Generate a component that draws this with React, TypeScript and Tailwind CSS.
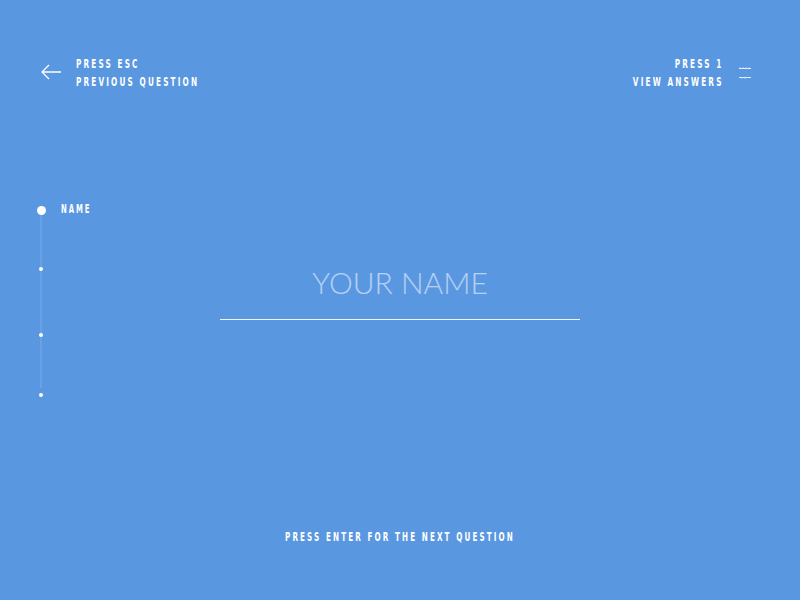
import React from "react";

const cond = { fontFamily: '"DejaVu Sans Condensed", "DejaVu Sans", sans-serif' };

export default function App() {
  return (
    <div className="w-[800px] h-[600px] bg-[#5a97e1] text-white flex flex-col overflow-hidden" style={cond}>
      {/* top bar */}
      <div className="flex justify-between items-start pl-[40px] pr-[48px] pt-[55px]">
        <div className="flex items-center gap-[14px]">
          <svg width="22" height="16" viewBox="0 0 22 16" fill="none" stroke="white" strokeWidth="1.3" className="mt-[-2px]">
            <path d="M21 8H2M9 1L2 8l7 7" />
          </svg>
          <div className="text-[12.5px] font-bold tracking-[3.3px] leading-[18px] scale-x-[0.65] origin-left w-[120px] whitespace-nowrap">
            <div>PRESS ESC</div>
            <div>PREVIOUS QUESTION</div>
          </div>
        </div>
        <div className="flex items-center gap-[17px]">
          <div className="text-[12.5px] font-bold tracking-[3.3px] leading-[18px] text-right scale-x-[0.65] origin-right whitespace-nowrap mr-[-3px]">
            <div>PRESS 1</div>
            <div>VIEW ANSWERS</div>
          </div>
          <svg width="14" height="14" viewBox="0 0 14 14" fill="none" stroke="white" strokeWidth="1" opacity="0.85" className="mt-[-1px]">
            <path d="M1 2.5h12M2 2.5v-1M5 2.5v-1M8 2.5v-1M11 2.5v-1" />
            <path d="M1 11.5h12M4 11.5v1M7 11.5v1" />
          </svg>
        </div>
      </div>

      {/* body */}
      <div className="flex mt-[109px] h-[220px]">
        <div className="relative w-[60px] flex flex-col items-center ml-[11px]">
          <div className="absolute left-1/2 top-[10px] bottom-[32px] w-px bg-white/20 -translate-x-1/2" />
          <div className="w-[9px] h-[9px] rounded-full bg-white mt-[6px] relative" />
          <div className="w-[4px] h-[4px] rounded-full bg-white mt-[52px] relative" />
          <div className="w-[4px] h-[4px] rounded-full bg-white mt-[62px] relative" />
          <div className="w-[4px] h-[4px] rounded-full bg-white mt-[56px] relative" />
        </div>
        <div className="flex-1 flex flex-col">
          <div className="text-[12px] font-bold tracking-[3px] leading-[14px] mt-[2px] ml-[-10px] scale-x-[0.64] origin-left whitespace-nowrap">NAME</div>
          <div className="flex flex-col items-center mr-[71px] mt-[48px]">
            <div
              className="text-[30px] font-light text-white/55 leading-[36px]"
              style={{ fontFamily: '"Lato", "Open Sans", sans-serif' }}
            >
              YOUR NAME
            </div>
            <div className="w-[360px] h-px bg-white/90 mt-[19px] ml-[-1px]" />
          </div>
        </div>
      </div>

      <div className="flex-1" />
      <div className="text-center text-[12.5px] font-bold tracking-[3.3px] pb-[53px] scale-x-[0.64] whitespace-nowrap">PRESS ENTER FOR THE NEXT QUESTION</div>
    </div>
  );
}
